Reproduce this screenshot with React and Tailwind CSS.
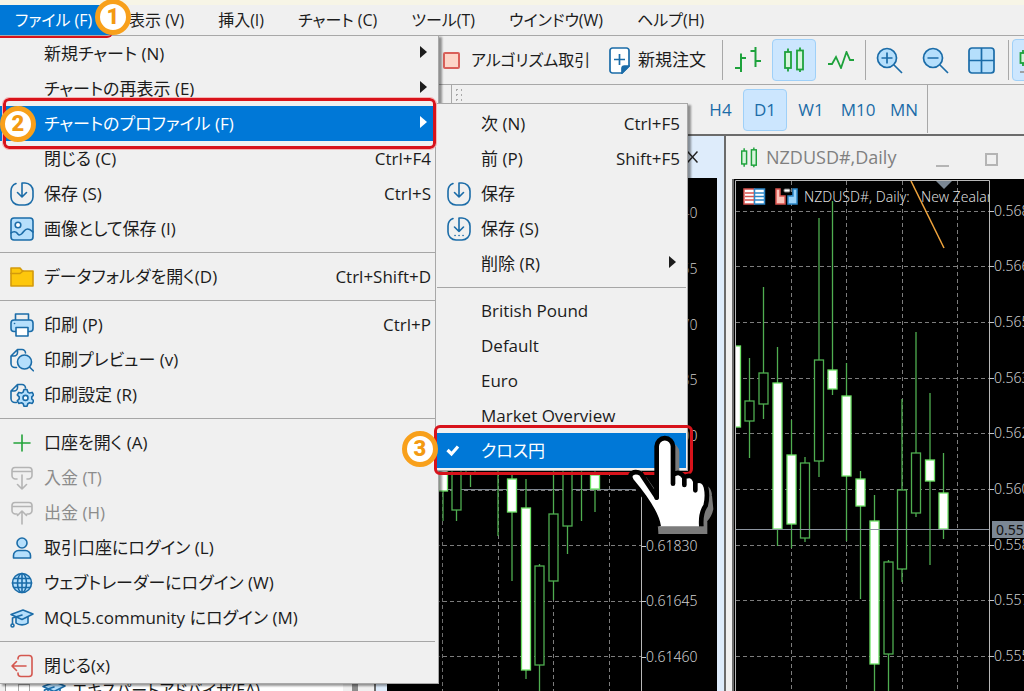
import React from "react";

const BLUE = "#1b6ca8";
const PALE = "#b5dffc";

function Icon({ children, stroke = BLUE, size = 24 }) {
  return (
    <svg
      width={size}
      height={size}
      viewBox="0 0 24 24"
      fill="none"
      stroke={stroke}
      strokeWidth="1.6"
      strokeLinecap="round"
      strokeLinejoin="round"
      aria-hidden="true"
    >
      {children}
    </svg>
  );
}

const SAVE_PATH = "M12 14.5V1h3a8 8 0 0 1 8 8v6a8 8 0 0 1-8 8H9a8 8 0 0 1-8-8V9a8 8 0 0 1 5-7.4M7.5 10.5l4.500 4.500 4.500-4.500";
const PAGE_PATH = "M6.500 19.500H5a4 4 0 0 1-4-4V8l6.500-6.500H12a3.500 3.500 0 0 1 3.500 3.500M1.500 8H4a3.500 3.500 0 0 0 3.500-3.500V2";

const icons = {
  save: (
    <Icon>
      <path d={SAVE_PATH} />
    </Icon>
  ),
  saveAs: (
    <Icon>
      <path d="M12 14.500V1h3a8 8 0 0 1 8 8v6a8 8 0 0 1-8 8H9a8 8 0 0 1-8-8V9a8 8 0 0 1 5-7.400M7.500 10l4.500 4.500 4.500-4.500" />
      <path d="M8 18.500h.1M12 18.500h.1M16 18.500h.1" />
    </Icon>
  ),
  image: (
    <Icon>
      <rect x="1" y="1" width="22" height="22" rx="3" fill={PALE} />
      <circle cx="8" cy="8" r="2.800" fill="#fff" />
      <path d="M1 16c2-2 5-1.500 6 0s2 3 4.500 1 3-5 6-5 3.500 1.500 5.500 3" fill="none" />
    </Icon>
  ),
  folder: (
    <Icon stroke="#d39a0c">
      <path d="M1 3h9l2.500 3H23v15H1z" fill="#fdc70c" />
      <path d="M1 8.500h9L13 6" />
    </Icon>
  ),
  print: (
    <Icon>
      <path d="M5.500 7V1h13v6" fill="#f0f0f0" />
      <rect x="1" y="7" width="22" height="11.500" rx="3" fill={PALE} />
      <rect x="6" y="14.500" width="12" height="8.500" fill="#fff" />
      <path d="M4.500 10.500h.1" />
    </Icon>
  ),
  preview: (
    <Icon>
      <path d={PAGE_PATH} />
      <circle cx="14.500" cy="14" r="7" fill={PALE} />
      <path d="M19.500 19l3.800 3.800" />
    </Icon>
  ),
  setup: (
    <Icon>
      <path d={PAGE_PATH} />
      <path
        d="M14 6.500h3l.8 2.600 1.700 1 2.700-.7 1.500 2.600-1.900 1.900v2l1.900 1.900-1.500 2.600-2.700-.7-1.700 1-.8 2.600h-3l-.8-2.600-1.700-1-2.700.7-1.500-2.600 1.900-1.900v-2l-1.900-1.900 1.500-2.600 2.700.7 1.700-1z"
        fill={PALE}
      />
      <circle cx="15.500" cy="14.900" r="2.500" fill="#fff" />
    </Icon>
  ),
  plus: (
    <Icon stroke="#23a33a">
      <path d="M12 4v16M4 12h16" />
    </Icon>
  ),
  deposit: (
    <Icon stroke="#b4b4b4">
      <path d="M7 13H5.500A3.500 3.500 0 0 1 2 9.500v-5A3 3 0 0 1 5 1.500h14a3 3 0 0 1 3 3v5A3.500 3.500 0 0 1 18.500 13H17M2 5.500h20M12 9v14M7.500 18.500L12 23l4.500-4.500" />
    </Icon>
  ),
  withdraw: (
    <Icon stroke="#b4b4b4">
      <path d="M7 13H5.500A3.500 3.500 0 0 1 2 9.500v-5A3 3 0 0 1 5 1.500h14a3 3 0 0 1 3 3v5A3.500 3.500 0 0 1 18.500 13H17M2 5.500h20M12 23V10M7.500 14.500L12 10l4.500 4.500" />
    </Icon>
  ),
  user: (
    <Icon>
      <circle cx="12" cy="7" r="5" fill={PALE} />
      <path d="M3.500 22v-2.500a5 5 0 0 1 5-5h7a5 5 0 0 1 5 5V22z" fill={PALE} />
    </Icon>
  ),
  globe: (
    <Icon>
      <circle cx="12" cy="12" r="9.500" fill={PALE} />
      <ellipse cx="12" cy="12" rx="4.500" ry="9.500" />
      <path d="M2.500 12h19M4 7.500h16M4 16.500h16M12 2.500v19" />
    </Icon>
  ),
  cap: (
    <Icon>
      <path d="M6 11v6c3 2.500 9 2.500 12 0v-6" fill={PALE} />
      <path d="M1 8.500L13 4l10 4-11 5.500z" fill={PALE} />
      <path d="M12 9L2.500 12v5.500" />
      <circle cx="2.500" cy="19.500" r="1.500" />
    </Icon>
  ),
  exit: (
    <Icon stroke="#d4574f">
      <path d="M8 5V4.500A3 3 0 0 1 11 1.500h8a3 3 0 0 1 3 3v15a3 3 0 0 1-3 3h-8a3 3 0 0 1-3-3V19M16 12H2M6.500 7.500L2 12l4.500 4.500" />
    </Icon>
  ),
  check: (
    <svg width="14" height="12" viewBox="0 0 14 12" fill="none" stroke="#fff" strokeWidth="3.200" className="mr-3" aria-hidden="true">
      <path d="M1.500 5l4 4L12 1.500" />
    </svg>
  ),
};

const fileMenu = [
  { label: "新規チャート (N)", sub: true },
  { label: "チャートの再表示 (E)", sub: true },
  { label: "チャートのプロファイル (F)", sub: true, active: true },
  { label: "閉じる (C)", keys: "Ctrl+F4" },
  { label: "保存 (S)", keys: "Ctrl+S", icon: "save" },
  { label: "画像として保存 (I)", icon: "image" },
  null,
  { label: "データフォルダを開く(D)", keys: "Ctrl+Shift+D", icon: "folder" },
  null,
  { label: "印刷 (P)", keys: "Ctrl+P", icon: "print" },
  { label: "印刷プレビュー (v)", icon: "preview" },
  { label: "印刷設定 (R)", icon: "setup" },
  null,
  { label: "口座を開く (A)", icon: "plus" },
  { label: "入金 (T)", icon: "deposit", disabled: true },
  { label: "出金 (H)", icon: "withdraw", disabled: true },
  { label: "取引口座にログイン (L)", icon: "user" },
  { label: "ウェブトレーダーにログイン (W)", icon: "globe" },
  { label: "MQL5.community にログイン (M)", icon: "cap" },
  null,
  { label: "閉じる(x)", icon: "exit" },
];

const profileMenu = [
  { label: "次 (N)", keys: "Ctrl+F5" },
  { label: "前 (P)", keys: "Shift+F5" },
  { label: "保存", icon: "save" },
  { label: "保存 (S)", icon: "saveAs" },
  { label: "削除 (R)", sub: true },
  null,
  { label: "British Pound" },
  { label: "Default" },
  { label: "Euro" },
  { label: "Market Overview" },
  { label: "クロス円", icon: "check", active: true },
];

function MenuRow({ item, endPad }) {
  const tone = item.active
    ? "bg-[#0078d7] text-white"
    : item.disabled
      ? "text-[#8c8c8c]"
      : "text-[#1c1c1c]";
  return (
    <button
      type="button"
      role="menuitem"
      disabled={item.disabled}
      className={"flex h-[35px] w-full items-center text-left whitespace-nowrap " + endPad + " " + tone}
    >
      <span className="mr-px flex w-[43px] shrink-0 items-center justify-center">{item.icon ? icons[item.icon] : null}</span>
      <span className="flex-1">{item.label}</span>
      {item.keys && <span>{item.keys}</span>}
      {item.sub && (
        <svg width="7" height="12" viewBox="0 0 7 12" className="mr-1 mb-1" aria-hidden="true">
          <path d="M0 0l7 6-7 6z" fill="currentColor" />
        </svg>
      )}
    </button>
  );
}

function Menu({ items, label, className, lineBox, endPad }) {
  return (
    <div
      role="menu"
      aria-label={label}
      className={"absolute border border-[#a8a8a8] bg-[#f0f0f0] text-[17px] shadow-[3px_2px_2px_rgba(0,0,0,0.4)] " + className}
    >
      {items.map((item, i) =>
        item ? (
          <MenuRow key={i} item={item} endPad={endPad} />
        ) : (
          <div key={i} className={"flex items-center " + lineBox}>
            <div className="h-px w-full bg-[#a6a6a6]" />
          </div>
        )
      )}
    </div>
  );
}

function Badge({ n, className }) {
  return (
    <span
      className={
        "absolute flex size-9 items-center justify-center rounded-full border-[5px] border-[#f8a01b] bg-white font-['Liberation_Sans_Narrow',Roboto,sans-serif] text-[22px] leading-none font-black text-[#f39a12] " +
        className
      }
    >
      {n}
    </span>
  );
}

const GREEN = "#4fae50";

function Candles({ data }) {
  return data.map(([x, hi, lo, top, bottom, solid], i) => (
    <g key={i} stroke={GREEN} strokeWidth="1.300">
      <path d={`M${x} ${hi}V${lo}`} />
      {top !== null && (
        <rect
          x={x - 4.5}
          y={top}
          width="9"
          height={bottom - top}
          fill={solid ? "#fff" : "#000"}
          stroke={solid ? "#6ee266" : GREEN}
        />
      )}
    </g>
  ));
}

const leftCandles = [
  [443, 460, 521, 460, 491, true],
  [456.5, 460, 521, 460, 510, false],
  [470.5, 460, 487, 460, 473, false],
  [498, 460, 536, null, null, false],
  [512, 474, 581, 479, 512, true],
  [526, 479, 679, 508, 670, true],
  [539.5, 564, 691, 566, 665, false],
  [553.5, 471, 600, 514, 581, false],
  [567.5, 460, 554, 460, 526, false],
  [581.5, 460, 521, null, null, false],
  [595, 470, 512, 475, 489, true],
];

const rightCandles = [
  [736, 346, 427, 346, 427, true],
  [749.5, 358, 458, 401, 421, false],
  [763.5, 287, 419, 373, 404, false],
  [777.5, 347, 546, 383, 529, true],
  [791.5, 420, 548, 455, 524, true],
  [805, 457, 542, 463, 538, false],
  [819, 218, 477, 360, 461, false],
  [832.5, 201, 395, 370, 389, true],
  [846.5, 363, 541, 396, 476, true],
  [860.5, 471, 599, 479, 506, true],
  [874.5, 495, 691, 521, 664, true],
  [888.5, 560, 691, 562, 654, false],
  [902, 399, 582, 490, 569, false],
  [916, 332, 517, 453, 513, false],
  [930, 393, 565, 460, 481, true],
  [943.5, 453, 539, 493, 529, true],
];

const leftPrices = [
  [213, "0.62940"],
  [269, "0.62755"],
  [325, "0.62570"],
  [380, "0.62385"],
  [436, "0.62200"],
  [546, "0.61830"],
  [601, "0.61645"],
  [657, "0.61460"],
];

const rightPrices = [
  [211, "0.56835"],
  [266, "0.56680"],
  [322, "0.56520"],
  [378, "0.56360"],
  [433, "0.56205"],
  [489, "0.56045"],
  [545, "0.55890"],
  [600, "0.55730"],
  [656, "0.55575"],
];

function Prices({ data, axis }) {
  return data.map(([y, text]) => (
    <g key={y}>
      <path d={`M${axis} ${y + 0.5}h5`} stroke="#c8c8c8" />
      <text x={axis + 5} y={y + 5} fill="#d0d0d0" className="font-['Noto_Sans',sans-serif] text-[14px] font-light">
        {text}
      </text>
    </g>
  ));
}

function LeftChart() {
  return (
    <svg width="330" height="513" viewBox="387 178 330 513" className="block bg-black" role="img" aria-label="Chart">
      <g stroke="#7d7d7d" strokeDasharray="4 3">
        {[442.5, 498.5, 553.5, 609.5].map((x) => (
          <path key={x} d={`M${x} 178V691`} />
        ))}
        {[490.5, 545.5, 601.5, 656.5].map((y) => (
          <path key={y} d={`M387 ${y}H641`} />
        ))}
      </g>
      <path d="M387 489.500H641" stroke="#7f8792" />
      <path d="M641.500 178V691" stroke="#b8b8b8" />
      <Candles data={leftCandles} />
      <Prices data={leftPrices} axis={641} />
    </svg>
  );
}

function RightChart() {
  return (
    <svg width="290" height="512" viewBox="734 179 290 512" className="block bg-black" role="img" aria-label="NZDUSD#,Daily">
      <defs>
        <clipPath id="plot">
          <rect x="736" y="181" width="253" height="510" />
        </clipPath>
      </defs>
      <g stroke="#7d7d7d" strokeDasharray="4 3">
        {[791.5, 846.5, 902.5, 957.5].map((x) => (
          <path key={x} d={`M${x} 181V691`} />
        ))}
        {rightPrices.map(([y]) => (
          <path key={y} d={`M736 ${y + 0.5}H989`} />
        ))}
      </g>
      <g clipPath="url(#plot)">
        <Candles data={rightCandles} />
        <path d="M911 181L944 248" stroke="#f0a43c" strokeWidth="1.500" fill="none" />
        <path d="M936 181h16l-8 8z" fill="#7b8794" />
        <g strokeWidth="1.500">
          <rect x="744" y="189" width="10.500" height="15" fill="#fff" stroke="#d9534f" />
          <rect x="754.500" y="189" width="10" height="15" fill="#fff" stroke="#2d87c8" />
          <path d="M745 193h9M745 196.500h9M745 200h9" stroke="#d9534f" />
          <path d="M755 193h9M755 196.500h9M755 200h9" stroke="#2d87c8" />
          <path d="M776 189h4v7h5v8h-9z" fill="#fbc4bb" stroke="#d9534f" />
          <path d="M797 189h-4v7h-5v8h9z" fill="#9bd4fa" stroke="#2d87c8" />
          <rect x="784" y="189" width="6" height="3" rx="1" fill="#fff" stroke="#777" strokeWidth="1" />
        </g>
        <text x="804" y="202" fill="#dedede" className="font-['Noto_Sans',sans-serif] text-[14px] font-light">
          NZDUSD#, Daily:
        </text>
        <text x="921" y="202" fill="#dedede" className="font-['Noto_Sans',sans-serif] text-[14px] font-light">
          New Zealand
        </text>
      </g>
      <path d="M736 529.500H989" stroke="#8d95a0" />
      <path d="M735.500 691V180.500H989.500V691" stroke="#b8b8b8" fill="none" />
      <Prices data={rightPrices} axis={989} />
      <rect x="992" y="521" width="32" height="17" fill="#7b8794" />
      <text x="996" y="535" fill="#111" className="font-['Noto_Sans',sans-serif] text-[14px]">
        0.55935
      </text>
    </svg>
  );
}

function CandlePair({ width, height }) {
  return (
    <svg width={width} height={height} viewBox="0 0 22 26" fill="#d7f5dc" stroke="#1ea23c" strokeWidth="1.800" aria-hidden="true">
      <path d="M5 1.500v23M17 .5v24.500" />
      <rect x="2" y="5" width="6" height="16" />
      <rect x="14" y="3.500" width="6" height="19" />
    </svg>
  );
}

function ToolButton({ label, on, children, className = "" }) {
  return (
    <button
      type="button"
      aria-label={label}
      aria-pressed={on}
      className={
        "flex h-[42px] shrink-0 items-center justify-center rounded-sm border " +
        (on ? "border-[#9fd0f8] bg-[#cce6fe] " : "border-transparent ") +
        className
      }
    >
      {children}
    </button>
  );
}

function Toolbar() {
  return (
    <div className="flex h-[50px] shrink-0 items-center overflow-hidden border-t border-b border-[#a8a8a8] pl-[443px] text-[17px] whitespace-nowrap">
      <button type="button" className="flex w-[166px] shrink-0 items-center gap-[11px] text-[16px]">
        <span className="size-[17px] shrink-0 rounded-xs border-2 border-[#d9605a] bg-[#fdd5c8]" />
        アルゴリズム取引
      </button>
      <button type="button" className="flex w-[112px] shrink-0 items-center gap-2">
        <svg width="21" height="27" viewBox="0 0 21 27" fill="#fff" stroke={BLUE} strokeWidth="1.700" aria-hidden="true">
          <path d="M3.500 1h14A2.500 2.500 0 0 1 20 3.500V19l-7 7H3.500A2.500 2.500 0 0 1 1 23.500v-20A2.500 2.500 0 0 1 3.500 1z" />
          <path d="M20 19h-4.500A2.500 2.500 0 0 0 13 21.500V26z" fill={BLUE} />
          <path d="M10.500 7v11M5 12.500h11" />
        </svg>
        新規注文
      </button>
      <span className="ml-px h-10 w-px shrink-0 bg-[#a8a8a8]" />
      <ToolButton label="Bar chart" className="w-[49px]">
        <svg width="26" height="26" viewBox="0 0 26 26" fill="none" stroke="#1ea23c" strokeWidth="2" aria-hidden="true">
          <path d="M6 6.500V25M0 21h6M6 11h5M20.500 0v20M15.500 4h5M20.500 14H26" />
        </svg>
      </ToolButton>
      <ToolButton label="Candles" on className="w-11">
        <CandlePair width="22" height="26" />
      </ToolButton>
      <ToolButton label="Line chart" className="w-[49px]">
        <svg width="26" height="18" viewBox="0 0 26 18" fill="none" stroke="#1ea23c" strokeWidth="1.800" aria-hidden="true">
          <path d="M0 13h4l4-7 5 11 5.500-16L22 9h4" />
        </svg>
      </ToolButton>
      <span className="h-10 w-px shrink-0 bg-[#a8a8a8]" />
      <ToolButton label="Zoom in" className="w-[46px]">
        <svg width="27" height="27" viewBox="0 0 27 27" fill={PALE} stroke={BLUE} strokeWidth="1.700" aria-hidden="true">
          <circle cx="11" cy="11" r="9.500" />
          <path d="M18 18l8 8M5.500 11h11M11 5.500v11" />
        </svg>
      </ToolButton>
      <ToolButton label="Zoom out" className="w-[46px]">
        <svg width="27" height="27" viewBox="0 0 27 27" fill={PALE} stroke={BLUE} strokeWidth="1.700" aria-hidden="true">
          <circle cx="11" cy="11" r="9.500" />
          <path d="M18 18l8 8M5.500 11h11" />
        </svg>
      </ToolButton>
      <ToolButton label="Tile windows" className="w-[46px]">
        <svg width="27" height="27" viewBox="0 0 27 27" fill={PALE} stroke={BLUE} strokeWidth="1.700" aria-hidden="true">
          <rect x="1" y="1" width="25" height="25" rx="3" />
          <path d="M13.500 1v25M1 13.500h25" />
        </svg>
      </ToolButton>
      <span className="ml-1 h-10 w-px shrink-0 bg-[#a8a8a8]" />
      <ToolButton label="Auto scroll" on className="ml-[3px] w-11">
        <svg width="30" height="26" viewBox="0 0 30 26" fill="#d7f5dc" stroke="#1ea23c" strokeWidth="1.800" aria-hidden="true">
          <path d="M4 3v16M15 1v18" />
          <rect x="1.500" y="6" width="5" height="10" />
          <rect x="12.500" y="4" width="5" height="12" />
          <path d="M1 25h28" stroke="#999" />
        </svg>
      </ToolButton>
    </div>
  );
}

function Timeframes() {
  return (
    <div className="flex h-[51px] shrink-0 items-start border-b-2 border-[#6b6b6b] pl-[451px] text-[17px] text-[#1b6ca8]">
      <span className="h-12 w-px bg-[#a8a8a8]" />
      <span className="mt-0.5 ml-0.5 h-11 w-2 bg-[radial-gradient(#a9a9a9_1px,transparent_1px)] bg-[size:5px_5px]" />
      <div className="mt-1 ml-[236px] flex">
        <ToolButton label="H4" className="w-[45px]">H4</ToolButton>
        <ToolButton label="D1" on className="w-11">D1</ToolButton>
        <ToolButton label="W1" className="w-12">W1</ToolButton>
        <ToolButton label="M10" className="w-[46px]">M10</ToolButton>
        <ToolButton label="MN" className="w-[46px]">MN</ToolButton>
      </div>
      <span className="h-12 w-px bg-[#a8a8a8]" />
    </div>
  );
}

function Hand() {
  return (
    <svg width="87" height="104" viewBox="565 100 261 312" className="absolute top-[433px] left-[628px]" aria-hidden="true">
      <g transform="translate(15 18)">
        <path
          d="M645 381C645 345 622 290 577 247C560 225 580 210 603 219L650 285V140A25 25 0 0 1 700 140V226Q720 208 735 231Q758 216 768 243Q796 238 798 270L802 310Q798 330 784 345V381Z"
          fill="#7b7b7b"
          stroke="#7b7b7b"
          strokeWidth="8"
        />
      </g>
      <path
        d="M657 380C652 345 620 295 576 243C562 222 585 211 604 222L651 293V140A24.500 24.500 0 0 1 700 140V226Q718 210 734 233Q756 220 767 245Q792 237 799 262Q805 290 798 318Q782 340 785 380Z"
        fill="#fff"
      />
      <path
        d="M657 380C652 345 620 295 576 243C562 222 585 211 604 222L651 293V140A24.500 24.500 0 0 1 700 140V252V226Q718 210 734 233V256V233Q756 220 767 245V272V245Q792 237 799 262Q805 290 798 318Q782 340 785 380"
        fill="none"
        stroke="#000"
        strokeWidth="14"
        strokeLinejoin="round"
      />
      <path d="M651 270V294" stroke="#000" strokeWidth="14" strokeLinecap="round" />
    </svg>
  );
}

const bar = ["表示 (V)", "挿入(I)", "チャート (C)", "ツール(T)", "ウインドウ(W)", "ヘルプ(H)"];

export default function App() {
  return (
    <div className="relative flex h-screen flex-col overflow-hidden bg-[#f0f0f0] font-['Open_Sans','Noto_Sans_CJK_JP',sans-serif] text-[#1c1c1c] [font-feature-settings:'palt']">
      <div className="h-[5px] shrink-0 bg-[#f7f5e6]" />
      <nav className="flex h-[30px] shrink-0 items-stretch text-[16px] whitespace-nowrap">
        <button type="button" className="w-[112px] bg-[#0078d7] pl-[15px] text-left text-white">
          ファイル (F)
        </button>
        {bar.map((label) => (
          <button key={label} type="button" className="px-[17px]">
            {label}
          </button>
        ))}
      </nav>
      <Toolbar />
      <Timeframes />

      <main className="flex min-h-0 flex-1">
        <aside className="flex w-[374px] shrink-0 overflow-hidden">
          <div className="ml-[5px] flex-1 border-l border-[#9a9a9a] bg-white pt-[542px]">
            <div className="flex items-center gap-2 pl-3 text-[16px] leading-6 whitespace-nowrap">
              <span className="size-3 border border-[#a8a8a8]" />
              <span className="flex items-center gap-1.5 pl-1">
                {icons.cap}
                エキスパートアドバイザ(EA)
              </span>
            </div>
          </div>
          <div className="mr-4 ml-[9px] w-1.5 bg-[#8c8c8c]" />
        </aside>

        <section className="flex w-[352px] shrink-0 flex-col border-r-2 border-l-2 border-[#6b6b6b] bg-[#deecfb]">
          <header className="flex h-[42px] shrink-0 items-center justify-end pr-[26px]">
            <button type="button" aria-label="Close">
              <svg width="11" height="12" viewBox="0 0 11 12" fill="none" stroke="#222" strokeWidth="1.500" aria-hidden="true">
                <path d="M.5.5l10 11M10.500.5l-10 11" />
              </svg>
            </button>
          </header>
          <div className="ml-[11px] overflow-hidden">
            <LeftChart />
          </div>
        </section>

        <section className="flex min-w-0 flex-1 flex-col overflow-hidden">
          <header className="flex h-[43px] shrink-0 items-center pl-[14px] text-[18px] text-[#808080]">
            <CandlePair width="18" height="21" />
            <h2 className="ml-2 flex-1">NZDUSD#,Daily</h2>
            <button type="button" aria-label="Minimize" className="mt-4 mr-9 h-0.5 w-[13px] bg-[#b4b4b4]" />
            <button type="button" aria-label="Maximize" className="mt-1 mr-[26px] size-[13px] border-2 border-[#b4b4b4]" />
          </header>
          <div className="ml-1.5 border-l-2 border-[#6b6b6b]">
            <RightChart />
          </div>
        </section>
      </main>

      <Menu items={fileMenu} label="ファイル" lineBox="h-[13px]" endPad="pr-1" className="top-[35px] -left-px w-[440px] pr-[3px]" />
      <Menu items={profileMenu} label="チャートのプロファイル" lineBox="h-3" endPad="pr-1.5" className="top-[103px] left-[435px] w-[253px] px-px py-[2px]" />

      <span className="absolute top-[5px] -left-2 h-[33px] w-[121px] rounded-md border-b-2 border-[#d8131b]" />
      <span className="absolute top-[98px] left-[3px] h-[51px] w-[433px] rounded-md border-[3px] border-[#d8131b] outline outline-[#f6b5b5]" />
      <span className="absolute top-[425px] left-[434px] h-[50px] w-[259px] rounded-md border-[3px] border-[#d8131b]" />
      <Badge n="1" className="-top-px left-[95px]" />
      <Badge n="2" className="top-[106px] left-0" />
      <Badge n="3" className="top-[431px] left-[402px]" />
      <Hand />
    </div>
  );
}
